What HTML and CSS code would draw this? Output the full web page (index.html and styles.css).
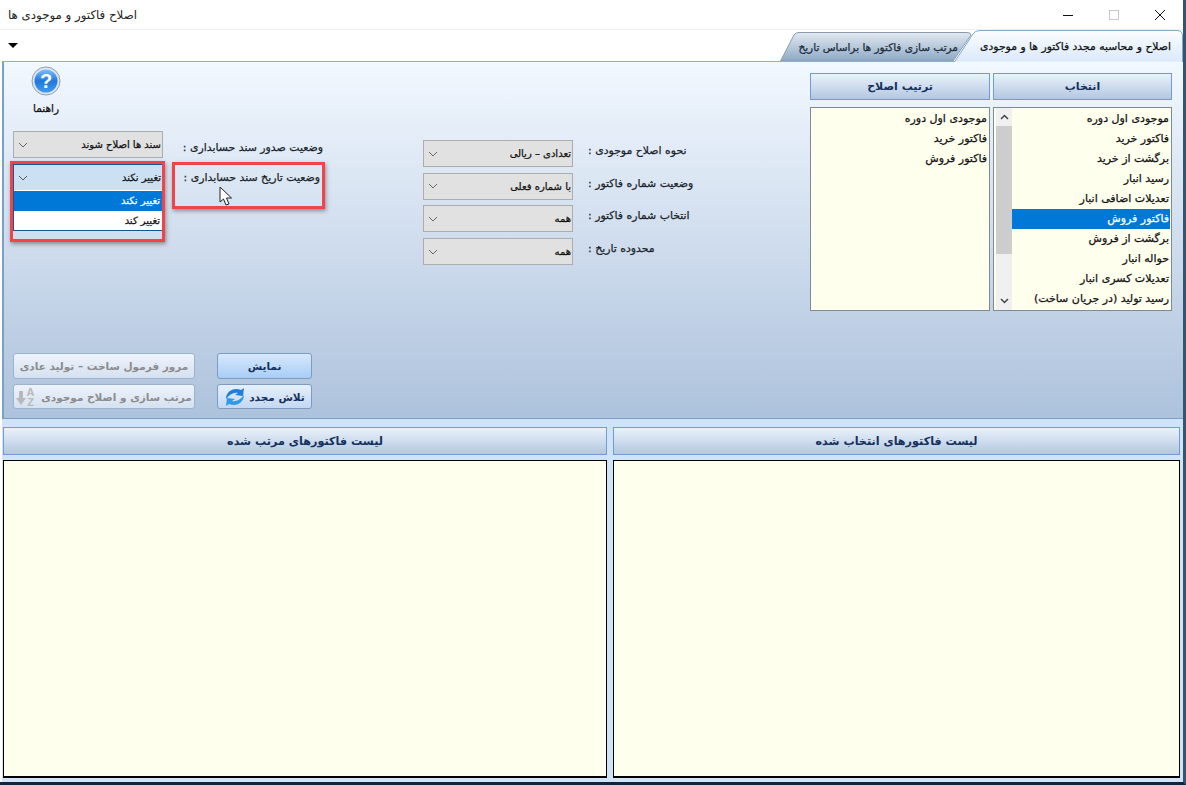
FILE: index.html
```html
<!DOCTYPE html>
<html lang="fa">
    <head>
        <meta charset="UTF-8" />
        <title>اصلاح فاکتور و موجودی ها</title>
        <link rel="stylesheet" href="styles.css">
    </head>
    <body>
        <div class="window">
            <!-- title bar -->
            <div class="titlebar">
                <span class="title" dir="rtl">اصلاح فاکتور و موجودی ها</span>
                <div class="win-controls">
                    <span class="win-btn"><svg width="12" height="12"><path d="M1 6.500H11" stroke="#111"/></svg></span>
                    <span class="win-btn"><svg width="12" height="12"><rect x="1.500" y="1.500" width="9" height="9" fill="none" stroke="#c8c8c8"/></svg></span>
                    <span class="win-btn"><svg width="12" height="12"><path d="M1 1L11 11M11 1L1 11" stroke="#111"/></svg></span>
                </div>
            </div>

            <!-- tabs -->
            <div class="tabbar">
                <span class="menu-caret"></span>
                <div class="tabs">
                    <div class="tab tab-back">
                        <svg class="tab-shape" width="192" height="29">
                            <defs>
                                <linearGradient id="tabBack" x1="0" y1="0" x2="0" y2="1">
                                    <stop offset="0" stop-color="#e2e9f1"/>
                                    <stop offset="1" stop-color="#8ea9c5"/>
                                </linearGradient>
                            </defs>
                            <path d="M0.500 29L14 3Q15.500 .5 19 .5H187Q191 .5 191 3L173 29Z" fill="url(#tabBack)" stroke="#8a9bad"/>
                        </svg>
                        <span class="tab-label" dir="rtl">مرتب سازی فاکتور ها براساس تاریخ</span>
                    </div>
                    <div class="tab tab-active">
                        <svg class="tab-shape" width="229" height="32">
                            <defs>
                                <linearGradient id="tabFront" x1="0" y1="0" x2="0" y2="1">
                                    <stop offset="0" stop-color="#fbfdff"/>
                                    <stop offset="1" stop-color="#dbe9fa"/>
                                </linearGradient>
                            </defs>
                            <path d="M0.500 32L19 4Q21 .5 26 .5H223Q228.500 .5 228.500 6V32Z" fill="url(#tabFront)" stroke="#7fa9c6"/>
                            <path d="M1 31.500H228" stroke="#e4effc"/>
                        </svg>
                        <span class="tab-label tab-label-front" dir="rtl">اصلاح و محاسبه مجدد فاکتور ها و موجودی</span>
                    </div>
                </div>
            </div>

            <!-- top panel -->
            <div class="panel">
                <div class="panel-left">
                    <div class="help">
                        <svg width="30" height="30" viewBox="0 0 30 30">
                            <defs>
                                <linearGradient id="helpFill" x1="0" y1="0" x2="0" y2="1">
                                    <stop offset="0" stop-color="#7fc0f5"/>
                                    <stop offset=".5" stop-color="#1f78dc"/>
                                    <stop offset="1" stop-color="#3f9cf0"/>
                                </linearGradient>
                            </defs>
                            <circle cx="15" cy="15" r="14" fill="#dfe6ee" stroke="#8b9fb5"/>
                            <circle cx="15" cy="15" r="11.500" fill="url(#helpFill)"/>
                            <text x="15" y="22" class="help-mark">?</text>
                        </svg>
                        <span class="help-label" dir="rtl">راهنما</span>
                    </div>

                    <div class="status-row">
                        <div class="combo">
                            <svg class="chevron" width="10" height="6"><path d="M1 1L5 5L9 1" fill="none" stroke="#666"/></svg>
                            <span dir="rtl">سند ها اصلاح شوند</span>
                        </div>
                        <span class="field-label status-first" dir="rtl">وضعیت صدور سند حسابداری :</span>
                    </div>
                    <div class="status-row status-row-second">
                        <div class="combo combo-open">
                            <svg class="chevron" width="10" height="6"><path d="M1 1L5 5L9 1" fill="none" stroke="#555"/></svg>
                            <span dir="rtl">تغییر نکند</span>
                            <div class="dropdown">
                                <div class="dropdown-item is-selected" dir="rtl">تغییر نکند</div>
                                <div class="dropdown-item" dir="rtl">تغییر کند</div>
                            </div>
                        </div>
                        <span class="field-label status-second" dir="rtl">وضعیت تاریخ سند حسابداری :</span>
                        <span class="highlight highlight-combo"></span>
                        <span class="highlight highlight-label"></span>
                        <svg class="cursor" width="14" height="21" viewBox="0 0 14 21">
                            <path d="M1 1V16L4.500 13L7 19L10 18L7.500 12H12.500Z" fill="#fff" stroke="#222"/>
                        </svg>
                    </div>

                    <div class="actions">
                        <button class="action is-disabled" dir="rtl">مرور فرمول ساخت – تولید عادی</button>
                        <button class="action action-blue" dir="rtl">نمایش</button>
                        <button class="action is-disabled" dir="rtl">
                            مرتب سازی و اصلاح موجودی
                            <svg width="20" height="20" viewBox="0 0 20 20">
                                <path d="M3 4H7V11H10L5 18L0 11H3Z" fill="#b9b9b9"/>
                                <text x="14.500" y="9" class="sort-mark">A</text>
                                <text x="14.500" y="19" class="sort-mark">Z</text>
                            </svg>
                        </button>
                        <button class="action action-retry" dir="rtl">
                            تلاش مجدد
                            <svg width="22" height="20" viewBox="0 0 22 20">
                                <path d="M2 12C2 5 9 0 17 3L20 1L19 9L11 8L14 6C10 5 6 7 2 12Z" fill="#1f7fd6"/>
                                <path d="M20 8C20 15 13 20 5 17L2 19L3 11L11 12L8 14C12 15 16 13 20 8Z" fill="#2f9be8"/>
                            </svg>
                        </button>
                    </div>
                </div>

                <div class="panel-middle">
                    <div class="combo">
                        <svg class="chevron" width="10" height="6"><path d="M1 1L5 5L9 1" fill="none" stroke="#666"/></svg>
                        <span dir="rtl">تعدادی – ریالی</span>
                    </div>
                    <span class="field-label" dir="rtl">نحوه اصلاح موجودی :</span>
                    <div class="combo">
                        <svg class="chevron" width="10" height="6"><path d="M1 1L5 5L9 1" fill="none" stroke="#666"/></svg>
                        <span dir="rtl">با شماره فعلی</span>
                    </div>
                    <span class="field-label" dir="rtl">وضعیت شماره فاکتور :</span>
                    <div class="combo">
                        <svg class="chevron" width="10" height="6"><path d="M1 1L5 5L9 1" fill="none" stroke="#666"/></svg>
                        <span dir="rtl">همه</span>
                    </div>
                    <span class="field-label" dir="rtl">انتخاب شماره فاکتور :</span>
                    <div class="combo">
                        <svg class="chevron" width="10" height="6"><path d="M1 1L5 5L9 1" fill="none" stroke="#666"/></svg>
                        <span dir="rtl">همه</span>
                    </div>
                    <span class="field-label" dir="rtl">محدوده تاریخ :</span>
                </div>

                <div class="panel-right">
                    <div class="header-btn" dir="rtl">ترتیب اصلاح</div>
                    <div class="header-btn" dir="rtl">انتخاب</div>
                    <div class="listbox">
                        <div class="list-rows">
                            <div class="list-row" dir="rtl">موجودی اول دوره</div>
                            <div class="list-row" dir="rtl">فاکتور خرید</div>
                            <div class="list-row" dir="rtl">فاکتور فروش</div>
                        </div>
                    </div>
                    <div class="listbox">
                        <div class="scrollbar">
                            <span class="scroll-arrow"><svg width="9" height="6"><path d="M1 5L4.500 1.500L8 5" fill="none" stroke="#444" stroke-width="1.500"/></svg></span>
                            <span class="scroll-thumb"></span>
                            <span class="scroll-arrow"><svg width="9" height="6"><path d="M1 1L4.500 4.500L8 1" fill="none" stroke="#444" stroke-width="1.500"/></svg></span>
                        </div>
                        <div class="list-rows">
                            <div class="list-row" dir="rtl">موجودی اول دوره</div>
                            <div class="list-row" dir="rtl">فاکتور خرید</div>
                            <div class="list-row" dir="rtl">برگشت از خرید</div>
                            <div class="list-row" dir="rtl">رسید انبار</div>
                            <div class="list-row" dir="rtl">تعدیلات اضافی انبار</div>
                            <div class="list-row is-selected" dir="rtl">فاکتور فروش</div>
                            <div class="list-row" dir="rtl">برگشت از فروش</div>
                            <div class="list-row" dir="rtl">حواله انبار</div>
                            <div class="list-row" dir="rtl">تعدیلات کسری انبار</div>
                            <div class="list-row" dir="rtl">رسید تولید (در جریان ساخت)</div>
                        </div>
                    </div>
                </div>
            </div>

            <!-- bottom lists -->
            <div class="results">
                <div class="header-btn" dir="rtl">لیست فاکتورهای مرتب شده</div>
                <div class="header-btn" dir="rtl">لیست فاکتورهای انتخاب شده</div>
                <div class="result-list"></div>
                <div class="result-list"></div>
            </div>
        </div>
    </body>
</html>
```

FILE: styles.css
```css
* {
    margin: 0;
    padding: 0;
    box-sizing: border-box;
}

body {
    font-family: "DejaVu Sans", sans-serif;
    font-size: 10px;
    color: #111;
    background: #fff;
    overflow: hidden;
}

.window {
    width: 1186px;
    height: 785px;
    display: flex;
    flex-direction: column;
    background: #fff;
    border-right: 3px solid #33566e;
    border-bottom: 3px solid #14233a;
}

/* title bar */
.titlebar {
    height: 30px;
    flex: none;
    display: flex;
    align-items: center;
    justify-content: space-between;
    padding-left: 8px;
    border-bottom: 1px solid #f0f0f0;
}

.title {
    font-size: 11.800px;
    color: #222;
}

.win-controls {
    display: flex;
}

.win-btn {
    width: 46px;
    height: 30px;
    display: flex;
    align-items: center;
    justify-content: center;
}

/* tabs */
.tabbar {
    height: 31px;
    flex: none;
    display: flex;
    align-items: flex-end;
    justify-content: space-between;
    padding-left: 8px;
    position: relative;
    z-index: 2;
}

.menu-caret {
    width: 0;
    height: 0;
    border-left: 5px solid transparent;
    border-right: 5px solid transparent;
    border-top: 5px solid #000;
    align-self: flex-start;
    margin-top: 13px;
}

.tabs {
    display: flex;
    align-items: flex-end;
}

.tab {
    position: relative;
    display: flex;
    align-items: center;
    justify-content: flex-end;
}

.tab-shape {
    position: absolute;
    left: 0;
    top: 0;
}

.tab-label {
    position: relative;
    font-size: 10.500px;
    -webkit-text-stroke: 0.25px currentColor;
    white-space: nowrap;
}

.tab-label-front {
    font-size: 10.800px;
}

.tab-back {
    width: 192px;
    height: 29px;
    margin-right: -18px;
    padding-right: 14px;
    color: #1d2c3c;
}

.tab-active {
    width: 229px;
    height: 32px;
    margin-bottom: -1px;
    padding-right: 12px;
}

/* top panel */
.panel {
    height: 358px;
    flex: none;
    display: flex;
    margin-left: 2px;
    padding: 0 11px 9px 9px;
    background: linear-gradient(#f2f8ff, #adc2dc);
    border-top: 1px solid #8fb0d0;
    border-left: 2px solid #7aa0c8;
    border-bottom: 1px solid #7d9cc8;
}

.panel-left {
    width: 312px;
    flex: none;
    display: flex;
    flex-direction: column;
}

.help {
    width: 66px;
    margin-top: 4px;
    display: flex;
    flex-direction: column;
    align-items: center;
    gap: 6px;
}

.help-mark {
    font: bold 20px "Liberation Sans", sans-serif;
    fill: #fff;
    text-anchor: middle;
}

.help-label {
    font-size: 10.500px;
    -webkit-text-stroke: 0.25px currentColor;
}

.status-row {
    display: flex;
    justify-content: space-between;
    margin-top: 17px;
}

.status-row-second {
    position: relative;
    margin-top: 6px;
}

.field-label {
    font-size: 10.900px;
    -webkit-text-stroke: 0.25px currentColor;
    white-space: nowrap;
    text-align: left;
    color: #1a1f2a;
}

.status-first {
    margin-top: 10px;
    margin-right: 2px;
}

.status-second {
    margin-top: 7px;
    margin-right: 5px;
}

/* combos */
.combo {
    position: relative;
    width: 150px;
    height: 27px;
    flex: none;
    display: flex;
    align-items: center;
    justify-content: space-between;
    padding: 0 1px 0 4px;
    font-size: 10px;
    -webkit-text-stroke: 0.25px currentColor;
    background: #e1e1e1;
    border: 1px solid #adadad;
}

.combo-open {
    background: #cce0f4;
    border: 1px solid #0a5a9c;
}

.dropdown {
    position: absolute;
    left: -1px;
    right: -1px;
    top: 25px;
    height: 41px;
    padding: 1px 0;
    background: #fff;
    border: 1px solid #0a5a9c;
    border-top: 0;
    z-index: 3;
}

.dropdown-item {
    height: 20px;
    line-height: 20px;
    padding-right: 2px;
}

.dropdown-item.is-selected {
    background: #0078d7;
    color: #fff;
}

/* red markers over the screenshot */
.highlight {
    position: absolute;
    border: 3px solid #f2424a;
    box-shadow: 1px 2px 4px rgba(60, 60, 60, 0.5);
    z-index: 4;
}

.highlight-combo {
    left: -3px;
    top: -3px;
    width: 155px;
    height: 81px;
}

.highlight-label {
    left: 159px;
    top: -2px;
    width: 153px;
    height: 47px;
}

.cursor {
    position: absolute;
    left: 206px;
    top: 22px;
    z-index: 5;
}

/* action buttons */
.actions {
    margin-top: auto;
    display: grid;
    grid-template-columns: 182px 95px;
    grid-template-rows: 26px 25px;
    column-gap: 22px;
    row-gap: 5px;
}

.action {
    display: flex;
    align-items: center;
    justify-content: center;
    gap: 5px;
    font-family: inherit;
    font-size: 10.500px;
    font-weight: bold;
    color: #14315e;
    background: linear-gradient(#e6f0fb, #c3d8f2);
    border: 1px solid #7d9cc4;
    border-radius: 3px;
}

.action-blue {
    background: linear-gradient(#d6e8fc, #a9cdf6);
}

.action-retry {
    gap: 3px;
}

.action.is-disabled {
    color: #8c8c8c;
    background: linear-gradient(#eef3fa, #d5e1f1);
    border-color: #9db2cc;
}

.sort-mark {
    font: bold 11px "Liberation Sans", sans-serif;
    fill: #b9b9b9;
    text-anchor: middle;
}

/* middle column */
.panel-middle {
    width: 265px;
    flex: none;
    align-self: flex-start;
    margin-left: 98px;
    margin-top: 78px;
    display: grid;
    grid-template-columns: 150px 1fr;
    column-gap: 15px;
    grid-auto-rows: 27px;
    row-gap: 5.700px;
    align-items: center;
}

.panel-middle .field-label {
    padding-bottom: 6px;
}

/* right column */
.panel-right {
    margin-left: auto;
    width: 362px;
    display: grid;
    grid-template-columns: 180px 179px;
    grid-template-rows: 27px 204px;
    column-gap: 3px;
    row-gap: 7px;
    margin-top: 11px;
    align-self: flex-start;
}

.header-btn {
    display: flex;
    align-items: center;
    justify-content: center;
    font-size: 11px;
    font-weight: bold;
    color: #14315e;
    background: linear-gradient(#eaf2fb, #b3c7e0);
    border: 1px solid #6f9bd8;
}

.listbox {
    display: flex;
    background: #ffffee;
    border: 1px solid #808a96;
}

.list-rows {
    flex: 1;
    padding-top: 1px;
    padding-right: 1px;
    font-size: 11px;
    -webkit-text-stroke: 0.25px currentColor;
}

.list-row {
    height: 20px;
    line-height: 20px;
    padding-right: 1px;
    white-space: nowrap;
}

.list-row.is-selected {
    background: #0078d7;
    color: #fff;
}

.scrollbar {
    width: 16px;
    flex: none;
    margin-left: 2px;
    display: flex;
    flex-direction: column;
    background: #f0f0f0;
}

.scroll-arrow {
    height: 18px;
    display: flex;
    align-items: center;
    justify-content: center;
}

.scroll-thumb {
    height: 128px;
    background: #cdcdcd;
    margin-bottom: auto;
}

/* bottom lists */
.results {
    flex: 1;
    margin-left: 2px;
    padding: 8px 0 4px 1px;
    display: grid;
    grid-template-columns: 604px 567px;
    grid-template-rows: 28px 1fr;
    column-gap: 6px;
    row-gap: 5px;
    background: #cfe3f9;
}

.results .header-btn {
    font-size: 11.200px;
}

.result-list {
    background: #ffffee;
    border: 2px solid #000;
    border-width: 1px 1px 2px 1px;
}
```
